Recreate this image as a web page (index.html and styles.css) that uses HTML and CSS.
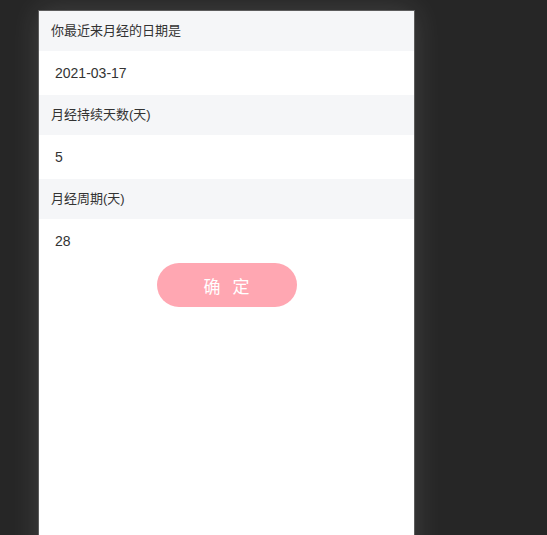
FILE: index.html
```html
<!DOCTYPE html>
<html>
  <head>
    <title>月经设置</title>
    <link rel="stylesheet" href="styles.css">
  </head>
  <body>
    <div class="phone">
      <div class="label">你最近来月经的日期是</div>
      <div class="value">2021-03-17</div>
      <div class="label">月经持续天数(天)</div>
      <div class="value">5</div>
      <div class="label">月经周期(天)</div>
      <div class="value">28</div>
      <div class="actions">
        <button class="btn">确 定</button>
      </div>
    </div>
  </body>
</html>
```

FILE: styles.css
```css
html,
body {
  margin: 0;
  background-color: #262626;
}

body {
  height: 100vh;
  overflow: hidden;
  box-sizing: border-box;
  padding: 10px 0 0 38px;
  font-family: "Liberation Sans", Arial, "Noto Sans CJK SC", sans-serif;
  color: #333;
}

.phone {
  width: 375px;
  height: 667px;
  background-color: #fff;
  border: 1px solid #5c5c5c;
  box-shadow: 0 0 28px rgba(255, 255, 255, 0.13);
}

.label {
  height: 40px;
  line-height: 40px;
  padding-left: 12px;
  background-color: #f5f6f8;
  font-size: 13px;
  color: #333;
}

.value {
  height: 44px;
  line-height: 44px;
  padding-left: 16px;
  font-size: 14px;
  color: #333;
}

.actions {
  display: flex;
  justify-content: center;
}

.btn {
  width: 140px;
  height: 44px;
  border: none;
  border-radius: 22px;
  background-color: #ffa7b2;
  color: #fff;
  font-family: "Noto Sans CJK SC", sans-serif;
  font-size: 17px;
  letter-spacing: 4px;
  padding: 0 0 0 4px;
}
```
